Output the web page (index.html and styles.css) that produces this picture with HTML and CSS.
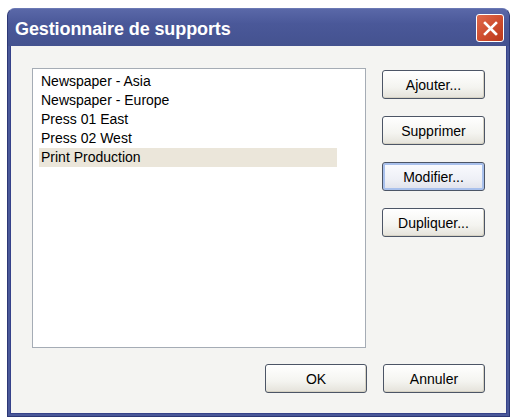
FILE: index.html
```html
<!DOCTYPE html>
<html lang="fr">
<head>
    <meta charset="UTF-8">
    <title>Gestionnaire de supports</title>
    <link rel="stylesheet" href="styles.css">
</head>
<body>
    <div class="window">
        <div class="title-bar">
            <span class="title">Gestionnaire de supports</span>
            <span class="close-button">
                <svg width="15" height="15" viewBox="0 0 15 15">
                    <path d="M2 2 L13 13 M13 2 L2 13" stroke="#fff" stroke-width="2.6" stroke-linecap="square"/>
                </svg>
            </span>
        </div>
        <div class="dialog-body">
            <div class="main-row">
                <ul class="list-box">
                    <li class="list-item">Newspaper - Asia</li>
                    <li class="list-item">Newspaper - Europe</li>
                    <li class="list-item">Press 01 East</li>
                    <li class="list-item">Press 02 West</li>
                    <li class="list-item selected">Print Production</li>
                </ul>
                <div class="side-buttons">
                    <button class="btn">Ajouter...</button>
                    <button class="btn">Supprimer</button>
                    <button class="btn focused">Modifier...</button>
                    <button class="btn">Dupliquer...</button>
                </div>
            </div>
            <div class="footer">
                <button class="btn">OK</button>
                <button class="btn">Annuler</button>
            </div>
        </div>
    </div>
</body>
</html>
```

FILE: styles.css
```css
* {
    margin: 0;
    padding: 0;
    box-sizing: border-box;
}

body {
    background-color: #ffffff;
    font-family: 'Liberation Sans', Arial, sans-serif;
    padding: 8px 0 0 7px;
}

.window {
    width: 503px;
    height: 409px;
    display: flex;
    flex-direction: column;
    background-color: #4a5899;
    border-radius: 8px 8px 0 0;
    border: 1px solid #2c3775;
    border-top-color: #6a78b4;
    overflow: hidden;
}

/* Title bar */
.title-bar {
    height: 37px;
    display: flex;
    align-items: center;
    justify-content: space-between;
    padding: 0 5px 0 7px;
    background: linear-gradient(#5a68a8, #4a5899 40%, #44528f);
}

.title {
    color: #ffffff;
    font-size: 18px;
    font-weight: bold;
    letter-spacing: -0.1px;
    padding-top: 3px;
}

.close-button {
    width: 28px;
    height: 28px;
    display: flex;
    align-items: center;
    justify-content: center;
    border: 1px solid #ffffff;
    border-radius: 3px;
    background: linear-gradient(135deg, #e06a4c, #cc4a2c 60%, #b8381c);
    margin-top: 1px;
}

/* Dialog body */
.dialog-body {
    flex: 1;
    margin: 0 2px 2px 2px;
    background-color: #f4f4f2;
    padding: 22px 21px 0 21px;
    border-left: 1px solid #36428a;
    border-right: 1px solid #36428a;
    border-bottom: 1px solid #36428a;
}

.main-row {
    display: flex;
    gap: 16px;
}

.list-box {
    list-style: none;
    width: 334px;
    height: 280px;
    background-color: #ffffff;
    border: 1px solid #a5acb5;
    padding: 3px 0 0 6px;
}

.list-item {
    width: 298px;
    height: 19px;
    line-height: 19px;
    padding-left: 2px;
    font-size: 14px;
    color: #000000;
}

.list-item.selected {
    background-color: #ebe6da;
}

.side-buttons {
    display: flex;
    flex-direction: column;
    gap: 17px;
    padding-top: 2px;
}

.btn {
    width: 103px;
    height: 29px;
    font-family: 'Liberation Sans', Arial, sans-serif;
    font-size: 14px;
    color: #000000;
    border: 1px solid #4c5566;
    border-radius: 3px;
    background: linear-gradient(#ffffff, #f4f4f0 60%, #e4e2da);
    box-shadow: inset -1px -1px 0 #d6d2c4;
}

.btn.focused {
    box-shadow: inset 0 0 0 2px #a8c0ec;
    background: linear-gradient(#fafbff, #eef0f6 60%, #dfe1ea);
}

.footer {
    display: flex;
    justify-content: flex-end;
    gap: 16px;
    margin-top: 16px;
}

.footer .btn {
    width: 102px;
}
```
